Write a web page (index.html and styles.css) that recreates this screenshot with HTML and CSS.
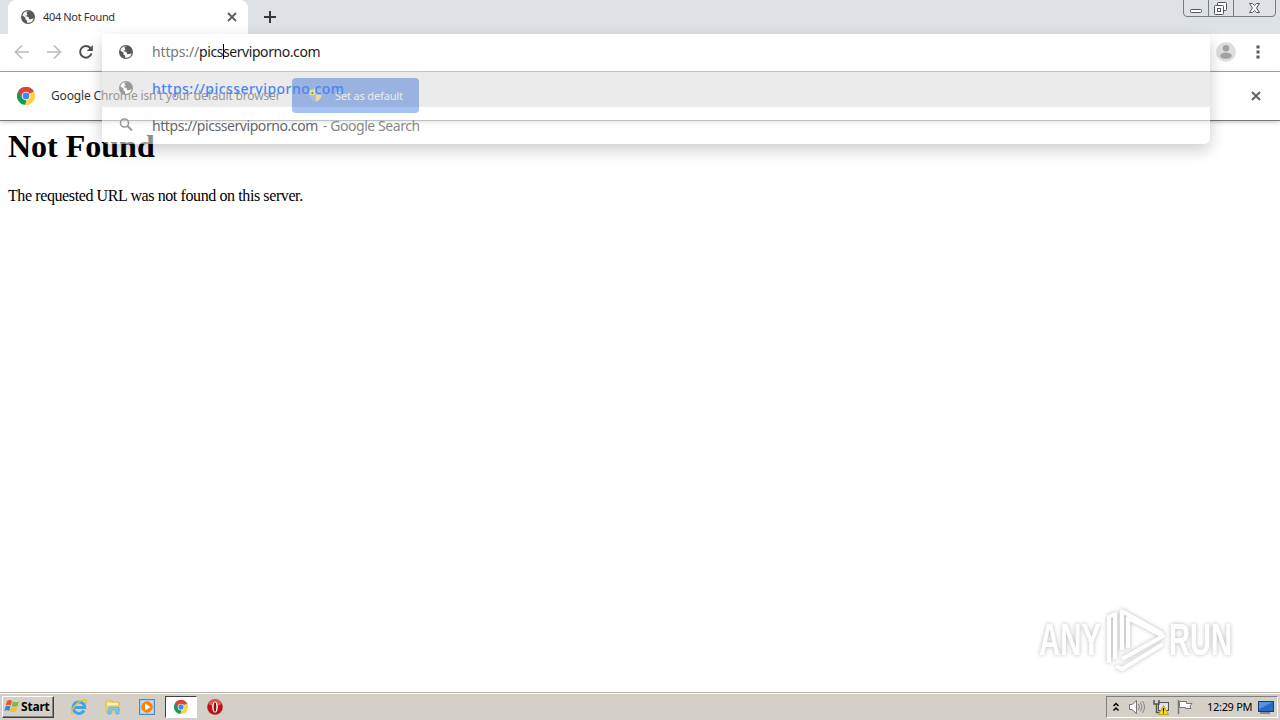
FILE: index.html
```
<!DOCTYPE html>
<html lang="en">
<head>
  <meta charset="UTF-8">
  <title>404 Not Found</title>
  <link rel="stylesheet" href="styles.css">
</head>
<body>

<svg class="defs" width="0" height="0">
  <symbol id="globe" viewBox="0 0 16 16">
    <circle cx="8" cy="8" r="7" fill="currentColor"/>
    <path d="M8 2.2 L6.3 4.5 L7.2 6 L5 7.5 L8.5 8 L9.5 10 L12 9.5 L13.8 8.5 A6 6 0 0 1 8 13.8 L7.5 11.5 L5.8 10.8 L5.5 8.8 L2.2 7.2 A6 6 0 0 1 8 2.2 Z" fill="#fff" transform="rotate(8 8 8)"/>
    <path d="M6.5 2.5 L11 2.4 L12 5 L9.7 6.3 L8.8 5 L7 5.2 Z" fill="currentColor"/>
  </symbol>
  <symbol id="chrome" viewBox="0 0 18 18">
    <path d="M9 9 L1.2 4.5 A9 9 0 0 1 16.8 4.5 Z" fill="#dc4437"/>
    <path d="M9 9 L16.8 4.5 A9 9 0 0 1 9 18 Z" fill="#fdd23e"/>
    <path d="M9 9 L9 18 A9 9 0 0 1 1.2 4.5 Z" fill="#109d58"/>
    <path d="M9 4.8 H17 L16.8 4.5 A9 9 0 0 0 1.2 4.5 L5.3 11 Z" fill="#dc4437"/>
    <path d="M12.7 11 L9 18 L7.5 17.8 L10.8 13 Z" fill="#fdd23e"/>
    <circle cx="9" cy="9" r="4.3" fill="#fff"/>
    <circle cx="9" cy="9" r="3.4" fill="#4285f4"/>
  </symbol>
  <symbol id="cross" viewBox="0 0 10 10">
    <path d="M1 1 L9 9 M9 1 L1 9" stroke="currentColor" stroke-width="1.8"/>
  </symbol>
</svg>

<header class="tabstrip">
  <div class="tab">
    <svg class="icon16"><use href="#globe"/></svg>
    <span class="tab-title">404 Not Found</span>
    <svg class="tab-close"><use href="#cross"/></svg>
  </div>
  <svg class="new-tab" viewBox="0 0 12 12"><path d="M6 0 V12 M0 6 H12" stroke="#33363a" stroke-width="2"/></svg>
  <div class="window-buttons">
    <svg viewBox="0 0 94 18" fill="none">
      <path d="M.5 0 V13 Q.5 16.500 4 16.500 H89 Q92.500 16.500 92.500 13 V0 M25.500 0 V16 M50.500 0 V16" stroke="#777b84"/>
      <rect x="7.500" y="9.500" width="11" height="3" rx="1" fill="#fff" stroke="#50545d"/>
      <rect x="34.500" y="2.500" width="9" height="8" rx="1" fill="#fff" stroke="#50545d"/>
      <rect x="31.500" y="5.500" width="9" height="9" rx="1" fill="#fff" stroke="#50545d"/>
      <rect x="34.500" y="8.500" width="3" height="3" stroke="#50545d"/>
      <path d="M66.500 3.500 H69.500 L71.500 5.500 L73.500 3.500 H76.500 L73.500 8 L76.500 12.500 H73.500 L71.500 10.500 L69.500 12.500 H66.500 L69.500 8 Z" fill="#fff" stroke="#50545d"/>
    </svg>
  </div>
</header>

<div class="toolbar">
  <svg class="nav" viewBox="0 0 16 16"><path d="M15 8 H2 M8 1.500 L1.500 8 L8 14.500" fill="none" stroke="#bcbcbc" stroke-width="1.700"/></svg>
  <svg class="nav" viewBox="0 0 16 16"><path d="M1 8 H14 M8 1.500 L14.500 8 L8 14.500" fill="none" stroke="#bcbcbc" stroke-width="1.700"/></svg>
  <svg class="nav" viewBox="0 0 16 16"><path d="M13.500 9.500 A5.800 5.800 0 1 1 12.300 4" fill="none" stroke="#4c4f53" stroke-width="2"/><path d="M14.800 1 V7 H8.800 Z" fill="#4c4f53"/></svg>
  <svg class="avatar" viewBox="0 0 20 20"><circle cx="10" cy="10" r="10" fill="#dedede"/><circle cx="10" cy="6.200" r="3.200" fill="#a2a2a2"/><ellipse cx="10" cy="13.700" rx="5.800" ry="3.100" fill="#a2a2a2"/></svg>
  <svg class="menu" viewBox="0 0 4 14"><path d="M.5 .5h3v3h-3z M.5 5.500h3v3h-3z M.5 10.500h3v3h-3z" fill="#55585c"/></svg>
</div>

<div class="infobar">
  <svg class="icon18"><use href="#chrome"/></svg>
  <span class="infobar-text">Google Chrome isn't your default browser</span>
  <div class="default-button">
    <svg class="shield" viewBox="0 0 12 14"><path d="M6 0 C4 2 2 2 0 2 V7 H6 Z M6 14 C10 12 12 10 12 7 H6 Z" fill="#ffe11f"/><path d="M6 0 C8 2 10 2 12 2 V7 H6 Z M6 14 C2 12 0 10 0 7 H6 Z" fill="#5d93ea"/></svg>
    <span>Set as default</span>
  </div>
  <svg class="infobar-close"><use href="#cross"/></svg>
</div>

<main class="page">
  <h1>Not Found</h1>
  <p>The requested URL was not found on this server.</p>
</main>

<div class="omnibox">
  <div class="row input">
    <svg class="icon16"><use href="#globe"/></svg>
    <span class="url typed"><span class="scheme">https://</span>pics<i class="caret"></i>serviporno.com</span>
  </div>
  <div class="row selected">
    <svg class="icon16"><use href="#globe"/></svg>
    <span class="url match">https://picsserviporno.com</span>
  </div>
  <div class="row">
    <svg class="icon16" viewBox="0 0 16 16"><circle cx="6.500" cy="6" r="4" fill="none" stroke="currentColor" stroke-width="1.600"/><path d="M9.500 9 L14 13.500" stroke="currentColor" stroke-width="1.900"/></svg>
    <span class="url">https://picsserviporno.com</span><span class="url hint">- Google Search</span>
  </div>
</div>

<svg class="watermark" viewBox="0 0 220 70">
  <g class="mark">
    <text x="7" y="51" textLength="62" lengthAdjust="spacingAndGlyphs">ANY</text>
    <text x="137" y="51" textLength="63" lengthAdjust="spacingAndGlyphs">RUN</text>
    <path d="M90 46 V7 L131 30 M77 59 V13 L83 10 V55 M84 62 L90 65 L131 40 M90 55 L131 32 L96 14 V44" fill="none" stroke="#fff" stroke-width="4" stroke-linejoin="round"/>
  </g>
</svg>

<footer class="taskbar">
  <div class="start">
    <svg class="flag" viewBox="0 0 16 16">
      <path d="M3 3 Q5.500 1 8 3 L6.800 7.500 Q4.500 6 1.800 7.500 Z" fill="#e8562a"/>
      <path d="M9 3.300 Q12 5 15 3.300 L13.600 8 Q11 9.500 7.800 8 Z" fill="#83b93b"/>
      <path d="M1.500 8.500 Q4 7 6.500 8.500 L5.300 13 Q3 11.500 .3 13 Z" fill="#3e86cf"/>
      <path d="M7.500 9 Q10.500 10.500 13.400 9 L12 13.600 Q9 15 6.200 13.600 Z" fill="#f5be2e"/>
    </svg>
    <b>Start</b>
  </div>
  <div class="apps">
    <div class="app"><svg viewBox="0 0 18 18"><path d="M14 12.500 A5.800 5.800 0 1 1 14.700 9.500 H5" fill="none" stroke="#3fa6df" stroke-width="3"/><path d="M3 16 C-2 14 8 1 16 2 C17.500 2.500 16 5 15.500 5.500" fill="none" stroke="#e2c14a" stroke-width="1.400"/></svg></div>
    <div class="app"><svg viewBox="0 0 18 18"><path d="M2 3 L7 2 L8 4 H15 V14 H2 Z" fill="#f3d978" stroke="#d0b154" stroke-width=".7"/><path d="M3 6 H14" stroke="#fff4bd" stroke-width="2"/><path d="M4 16 V11 Q4 9 6 9 H13 Q15 9 15 11 V16 H12 V12 H7 V16 Z" fill="#83c9e9" stroke="#5199be" stroke-width=".6"/></svg></div>
    <div class="app"><svg viewBox="0 0 18 18"><rect x="1.500" y="1.500" width="15" height="15" fill="#a8cce9" stroke="#5687ae"/><rect x="3.500" y="3.500" width="11" height="11" fill="#d5e7f4"/><circle cx="9" cy="9" r="5.800" fill="#f28316"/><path d="M7 5.500 L12.500 9 L7 12.500 Z" fill="#fff"/></svg></div>
    <div class="app active"><svg class="small-chrome"><use href="#chrome"/></svg></div>
    <div class="app"><svg viewBox="0 0 18 18"><circle cx="9" cy="9" r="7.800" fill="#b8151b"/><path d="M2 6 A7.500 7.500 0 0 1 16 6 Q9 10 2 6 Z" fill="#dc5553"/><ellipse cx="9" cy="9" rx="2.800" ry="5.600" fill="#fff"/><ellipse cx="9" cy="9" rx="1.300" ry="4.700" fill="#8b1014"/></svg></div>
  </div>
  <div class="tray">
    <svg class="chevrons" viewBox="0 0 8 10"><path d="M1.500 4 L4 1.500 L6.500 4 M1.500 8.500 L4 6 L6.500 8.500" fill="none" stroke="#000" stroke-width="1.500"/></svg>
    <svg class="tray-icon" viewBox="0 0 16 16" fill="none"><path d="M.5 5.500 H3 L7.500 1.500 V14.500 L3 10.500 H.5 Z" fill="#fff" stroke="#777"/><path d="M9.500 5 Q11.500 8 9.500 11 M11.500 3.500 Q14.500 8 11.500 12.500 M13.500 2 Q17.500 8 13.500 14" stroke="#888"/></svg>
    <svg class="tray-icon" viewBox="0 0 16 16"><rect x="5.500" y="3.500" width="10" height="8" fill="#dde2e8" stroke="#555"/><path d="M1 1 V5 H6 V1 M3.500 5 V13.500 H9" fill="none" stroke="#555" stroke-width="1.500"/><path d="M10.500 6.500 L15.500 15.500 H5.500 Z" fill="#ffda20" stroke="#b99408" stroke-width=".8"/><path d="M10.500 9 V12.500 M10.500 13.500 V14.600" stroke="#000" stroke-width="1.200"/></svg>
    <svg class="tray-icon" viewBox="0 0 16 16"><path d="M1.500 1 V15" stroke="#777" stroke-width="1.500"/><path d="M2.500 2.500 H9.500 V4.500 H15 L13 7 L14 9.500 H8.500 V8.500 H2.500 Z" fill="#fff" stroke="#777"/></svg>
    <span class="clock">12:29 PM</span>
    <svg class="desktop" viewBox="0 0 16 14"><rect x=".5" y="1.500" width="15" height="10" fill="#266cc2" stroke="#173c70"/><path d="M1 2 H15 L1 9 Z" fill="#5195da"/><path d="M2 13 H12" stroke="#345" stroke-width="1"/></svg>
  </div>
</footer>

</body>
</html>
```
FILE: styles.css
```
* {
  box-sizing: border-box;
}

body {
  margin: 0;
  width: 1280px;
  height: 720px;
  overflow: hidden;
  display: flex;
  flex-direction: column;
  position: relative;
  background: #fff;
  font-family: "Noto Sans", "Open Sans", sans-serif;
  font-size: 12px;
  color: #333;
}

svg {
  display: block;
  flex: none;
}

.defs {
  position: absolute;
}

.icon16 {
  width: 16px;
  height: 16px;
  color: #56595d;
}
.icon18 {
  width: 18px;
  height: 18px;
}

.tabstrip {
  height: 34px;
  flex: none;
  display: flex;
  background: #dee1e6;
  padding-left: 8px;
}
.tab {
  width: 240px;
  display: flex;
  align-items: center;
  padding: 0 11px 0 12px;
  background: #fff;
  border-radius: 8px 8px 0 0;
}
.tab-title {
  flex: 1;
  margin-left: 7px;
  padding-bottom: 2px;
  font-size: 11px;
  letter-spacing: -0.35px;
}
.tab-close {
  width: 10px;
  height: 10px;
  color: #5b5e62;
}
.new-tab {
  width: 12px;
  height: 12px;
  margin: 11px 0 0 16px;
}
.window-buttons {
  margin-left: auto;
  width: 97px;
}
.window-buttons svg {
  width: 94px;
  height: 18px;
}

.toolbar {
  height: 38px;
  flex: none;
  display: flex;
  align-items: center;
  gap: 16px;
  padding: 0 20px 2px 14px;
  border-bottom: 1px solid #a9a9a9;
}
.nav {
  width: 16px;
  height: 16px;
}
.avatar {
  width: 20px;
  height: 20px;
  margin-left: auto;
}
.menu {
  width: 4px;
  height: 14px;
  margin-left: 4px;
}

.infobar {
  height: 49px;
  flex: none;
  display: flex;
  align-items: center;
  padding: 0 19px 1px 17px;
  border-bottom: 1px solid #777;
  box-shadow: 0 1px 4px rgba(0, 0, 0, 0.25);
}
.infobar-text {
  width: 241px;
  margin-left: 16px;
  padding-bottom: 1px;
  font-size: 12px;
  letter-spacing: -0.16px;
  white-space: nowrap;
}
.default-button {
  width: 127px;
  height: 35px;
  display: flex;
  align-items: center;
  gap: 13px;
  padding: 0 0 1px 17px;
  border-radius: 4px;
  background: #3b78e7;
  color: #fff;
  font-size: 11px;
  letter-spacing: -0.15px;
}
.shield {
  width: 13px;
  height: 14px;
}
.infobar-close {
  width: 10px;
  height: 10px;
  margin-left: auto;
  color: #5b5e62;
}

.page {
  flex: 1;
  padding: 8px;
  font-family: "Liberation Serif", serif;
  color: #000;
}
.page h1 {
  margin: 0;
  font-size: 32px;
  line-height: 35px;
}
.page p {
  margin: 22px 0 0;
  font-size: 16px;
  line-height: 19px;
  letter-spacing: -0.4px;
}

.omnibox {
  position: absolute;
  left: 102px;
  top: 34px;
  width: 1108px;
  height: 110px;
  border-radius: 6px;
  background: rgba(255, 255, 255, 0.55);
  box-shadow: 0 6px 16px rgba(0, 0, 0, 0.2);
}
.row {
  height: 36px;
  display: flex;
  align-items: center;
  padding-left: 16px;
}
.row .icon16 {
  color: #999;
}
.row.input {
  height: 37px;
  padding-bottom: 1px;
  background: #fff;
}
.row.input .icon16 {
  color: #56595d;
}
.row.selected {
  padding-bottom: 2px;
  background: rgba(0, 0, 0, 0.08);
}
.url {
  margin-left: 18px;
  font-size: 14px;
  letter-spacing: -0.43px;
  color: #666;
  white-space: nowrap;
}
.typed {
  padding-bottom: 1px;
  color: #222;
}
.scheme {
  color: #777;
  letter-spacing: -0.15px;
}
.caret {
  display: inline-block;
  width: 1px;
  height: 15px;
  margin-right: -1px;
  vertical-align: -2px;
  background: #000;
}
.url.match {
  color: #4a86f0;
  font-weight: 500;
  letter-spacing: 0.46px;
}
.url.hint {
  margin-left: 5px;
  color: #888;
}

.watermark {
  position: absolute;
  left: 1032px;
  top: 604px;
  width: 220px;
  height: 70px;
}
.mark {
  fill: #fff;
  filter: drop-shadow(0 0 2px rgba(0, 0, 0, 0.28));
  font-family: "Liberation Sans", sans-serif;
  font-weight: bold;
  font-size: 44px;
}

.taskbar {
  height: 28px;
  flex: none;
  display: flex;
  align-items: center;
  padding: 0 2px;
  background: #d4d0c8;
  border-top: 1px solid #b8b4ac;
  box-shadow: inset 0 1px #fff;
  color: #000;
}
.start {
  width: 52px;
  height: 22px;
  display: flex;
  align-items: center;
  gap: 1px;
  padding: 0 0 1px 1px;
  border: 1px solid;
  border-color: #fff #404040 #404040 #fff;
  box-shadow: inset -1px -1px #808080;
  font-size: 12px;
  letter-spacing: -0.2px;
}
.flag {
  width: 16px;
  height: 16px;
}
.apps {
  display: flex;
  margin-left: 9px;
  gap: 2px;
}
.app {
  width: 32px;
  height: 22px;
  display: flex;
  align-items: center;
  justify-content: center;
}
.app svg {
  width: 18px;
  height: 18px;
}
.app.active {
  background: #fff;
  border: 1px solid;
  border-color: #404040 #fff #fff #404040;
}
.app .small-chrome {
  width: 14px;
  height: 14px;
}
.tray {
  margin-left: auto;
  width: 172px;
  height: 22px;
  display: flex;
  align-items: center;
  padding-left: 5px;
  border: 1px solid;
  border-color: #808080 #fff #fff #808080;
}
.chevrons {
  width: 8px;
  height: 10px;
  margin-right: 9px;
}
.tray-icon {
  width: 16px;
  height: 16px;
  margin-right: 8px;
}
.clock {
  width: 53px;
  margin-left: 4px;
  padding-left: 2px;
  font-size: 11px;
  letter-spacing: -0.3px;
  white-space: nowrap;
}
.desktop {
  width: 16px;
  height: 14px;
}
```
